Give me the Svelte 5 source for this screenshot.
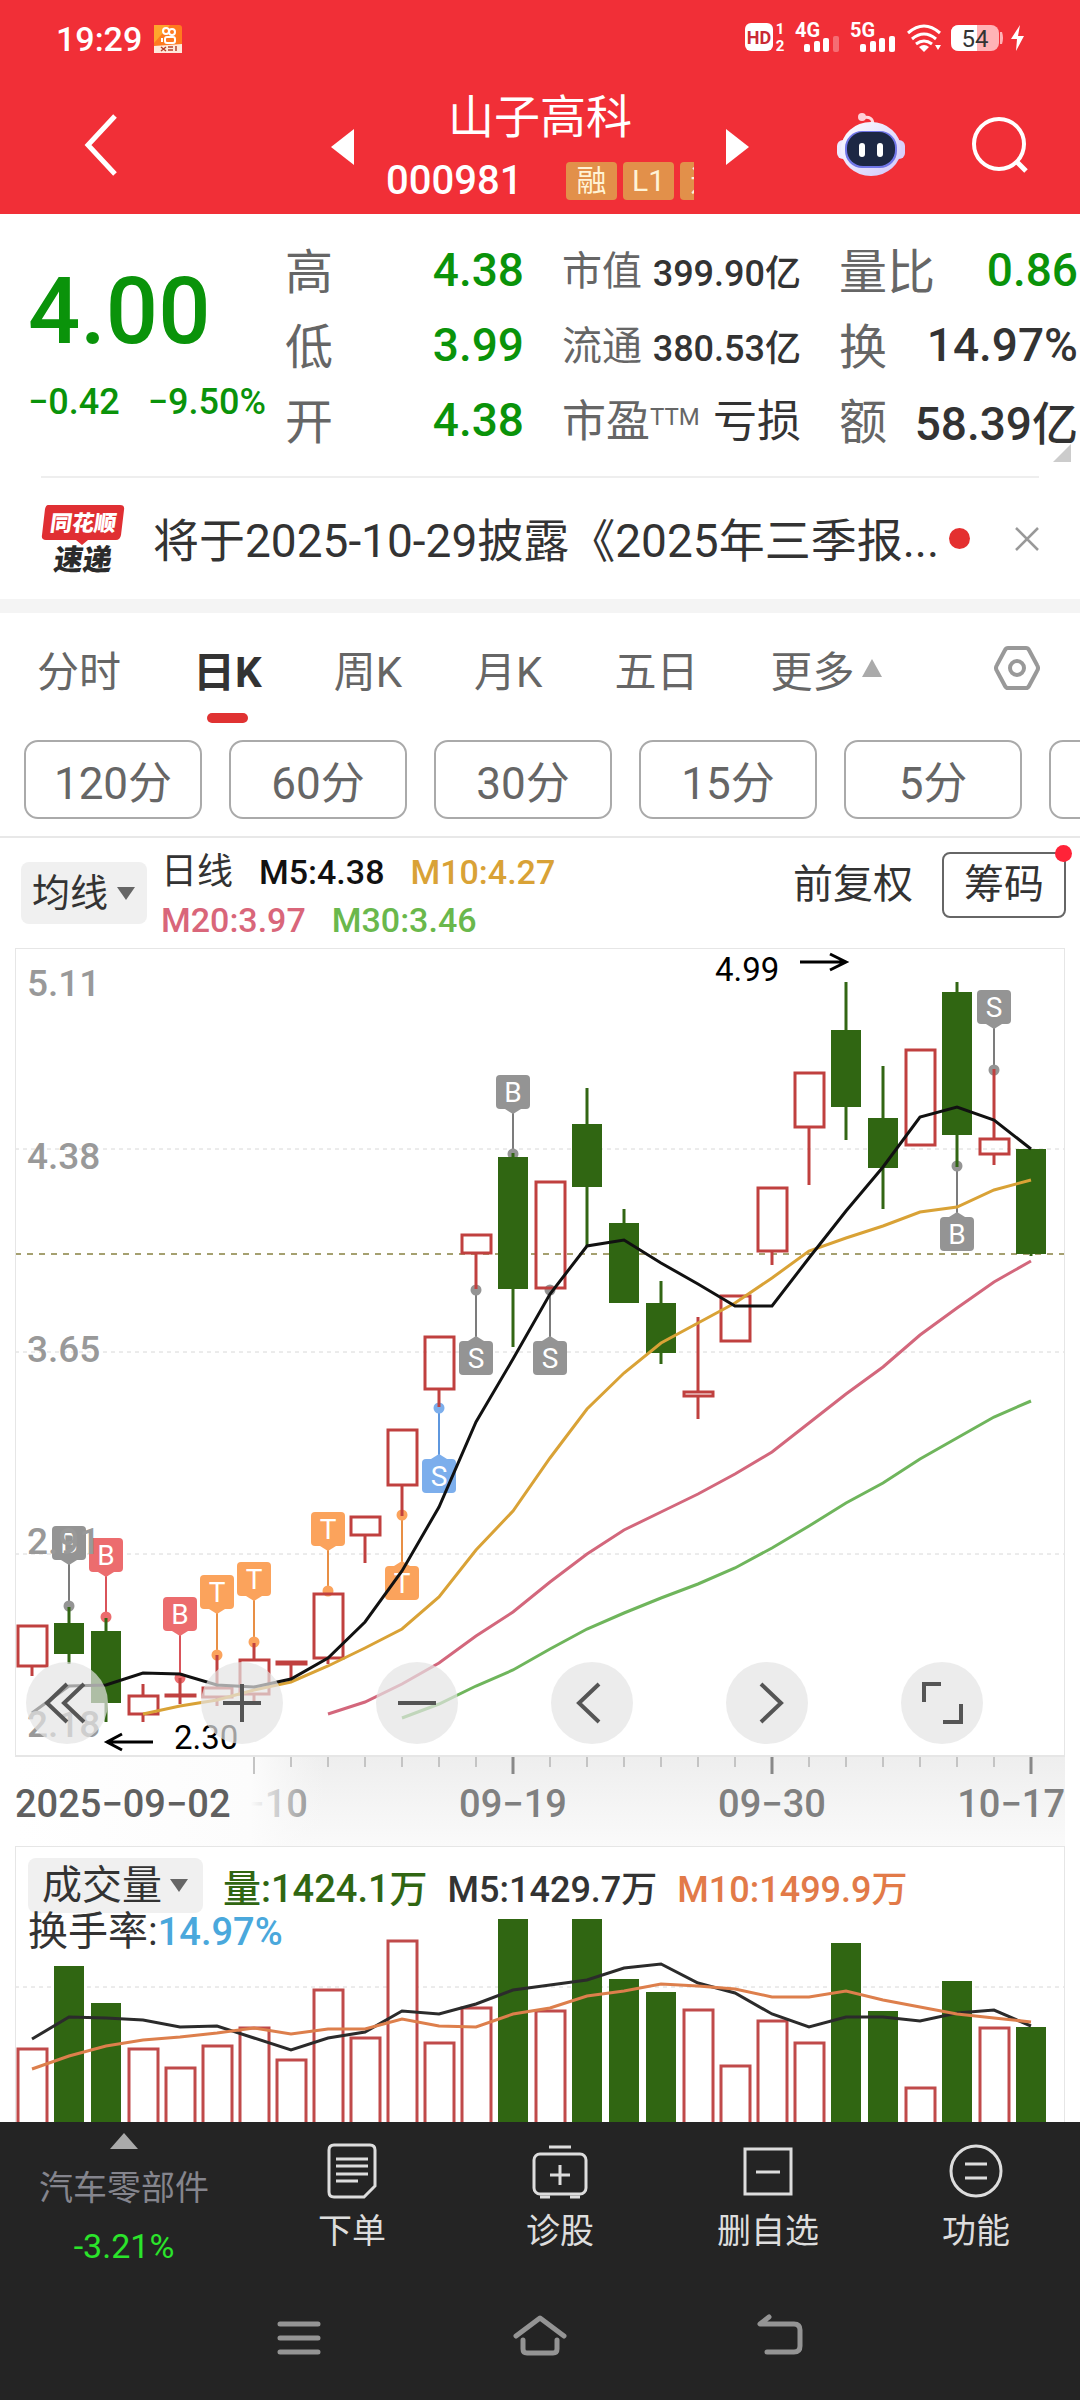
<script lang="ts">
  type Candle = { top: number; bottom: number; high?: number; low?: number; up: boolean };
  type Marker = { i: number; text: string; tone: string; box: number; dot: number };

  const x = (i: number) => 17 + i * 37;

  const c = (up: boolean, top: number, bottom: number, high = top, low = bottom): Candle =>
    ({ up, top, bottom, high, low });

  const candles: Candle[] = [
    c(true, 678, 718, 678, 728),
    c(false, 675, 706, 659, 716),
    c(false, 683, 755, 670, 774),
    c(true, 748, 766, 736, 774),
    c(true, 747, 747, 730, 756),
    c(true, 740, 749, 707, 758),
    c(true, 712, 746, 695, 755),
    c(true, 714, 716, 714, 730),
    c(true, 646, 710, 646, 716),
    c(true, 569, 587, 569, 615),
    c(true, 482, 537, 482, 568),
    c(true, 389, 441, 389, 459),
    c(true, 287, 305, 287, 341),
    c(false, 209, 341, 205, 399),
    c(true, 234, 340),
    c(false, 176, 239, 140, 299),
    c(false, 275, 355, 261, 355),
    c(false, 355, 405, 333, 416),
    c(true, 444, 448, 369, 471),
    c(true, 348, 393),
    c(true, 240, 303, 240, 317),
    c(true, 125, 179, 125, 237),
    c(false, 82, 159, 34, 192),
    c(false, 170, 220, 118, 261),
    c(true, 102, 197),
    c(false, 44, 187, 34, 219),
    c(true, 191, 206, 121, 217),
    c(false, 201, 306, 201, 308)
  ];

  const markers: Marker[] = [
    { i: 1, text: 'B', tone: 'gray', box: 578, dot: 658 },
    { i: 2, text: 'B', tone: 'red', box: 590, dot: 669 },
    { i: 4, text: 'B', tone: 'red', box: 649, dot: 730 },
    { i: 5, text: 'T', tone: 'orange', box: 627, dot: 707 },
    { i: 6, text: 'T', tone: 'orange', box: 614, dot: 694 },
    { i: 8, text: 'T', tone: 'orange', box: 564, dot: 643 },
    { i: 10, text: 'T', tone: 'orange', box: 618, dot: 567 },
    { i: 11, text: 'S', tone: 'blue', box: 511, dot: 460 },
    { i: 12, text: 'S', tone: 'gray', box: 393, dot: 342 },
    { i: 13, text: 'B', tone: 'gray', box: 127, dot: 206 },
    { i: 14, text: 'S', tone: 'gray', box: 393, dot: 342 },
    { i: 25, text: 'B', tone: 'gray', box: 269, dot: 218 },
    { i: 26, text: 'S', tone: 'gray', box: 42, dot: 122 }
  ];

  const ma5 = [765, 738, 737, 725, 726, 737, 739, 731, 710, 674, 623, 559, 474, 411, 346, 298, 292, 315, 336, 358, 358, 310, 263, 219, 169, 159, 172, 201];
  const ma10 = [766, 758, 752, 742, 734, 718, 700, 681, 649, 602, 563, 510, 461, 425, 395, 375, 355, 330, 303, 290, 278, 264, 259, 242, 232];
  const ma20 = [766, 754, 736, 715, 688, 664, 634, 606, 582, 564, 546, 526, 504, 475, 446, 419, 387, 360, 334, 313];
  const ma30 = [770, 756, 738, 722, 701, 681, 665, 650, 636, 620, 600, 578, 555, 535, 511, 490, 469, 453];

  const volumes = [202, 120, 157, 202, 221, 199, 181, 213, 143, 191, 94, 196, 161, 73, 164, 73, 133, 146, 163, 219, 174, 196, 97, 165, 241, 135, 181, 181];
  const vol5 = [193, 171, 172, 174, 181, 180, 192, 204, 192, 186, 165, 168, 158, 144, 139, 134, 122, 118, 137, 147, 168, 181, 171, 171, 175, 167, 164, 180];
  const vol10 = [223, 210, 200, 194, 191, 187, 182, 188, 183, 183, 173, 180, 181, 168, 162, 150, 145, 138, 140, 143, 151, 151, 145, 154, 161, 168, 172, 176];

  // series shorter than the window are aligned to its right edge
  const line = (values: number[]) =>
    values.map((y, k) => `${x(k + candles.length - values.length)},${y}`).join(' ');

  const priceLabels = [
    { text: '5.11', y: 48 },
    { text: '4.38', y: 221 },
    { text: '3.65', y: 414 },
    { text: '2.91', y: 606 },
    { text: '2.18', y: 789 }
  ];

  const ticks = Array.from({ length: 22 }, (_, k) => k + 6);

  const stats = [
    [
      { name: '高', value: '4.38', down: true },
      { name: '低', value: '3.99', down: true },
      { name: '开', value: '4.38', down: true }
    ],
    [
      { name: '市值', value: '399.90亿', small: true },
      { name: '流通', value: '380.53亿', small: true },
      { name: '市盈', sup: 'TTM', value: '亏损', medium: true }
    ],
    [
      { name: '量比', value: '0.86', down: true },
      { name: '换', value: '14.97%' },
      { name: '额', value: '58.39亿' }
    ]
  ];

  const periods = ['分时', '日K', '周K', '月K', '五日'];
  const minutes = ['120分', '60分', '30分', '15分', '5分', '1分'];
  let period = $state('日K');
</script>

<div class="app">
  <header>
    <div class="status">
      <span class="clock">19:29</span>
      <svg class="kuai" viewBox="0 0 28 28" aria-hidden="true">
        <rect width="28" height="28" rx="3" fill="#ff7a1f" />
        <path d="M0 0h16L0 18z" fill="#ffa52c" />
        <g fill="none" stroke="#fff" stroke-width="2">
          <circle cx="12" cy="6" r="3" />
          <circle cx="18" cy="7" r="3" />
          <rect x="11" y="12" width="10" height="6" rx="2" />
          <path d="M8 13v4" />
        </g>
        <path d="M0 21l28-2v9H0z" fill="#ffe9dc" />
        <path d="M7 22l5 4M12 22l-5 4M14 22h5M14 25h5M22 21v5" stroke="#b4442c" stroke-width="1.5" />
      </svg>
      <svg class="signals" viewBox="0 0 290 40" role="img" aria-label="电量 54">
        <rect x="5" y="4" width="28" height="28" rx="6" fill="#fff" />
        <text class="hd" x="19" y="25">HD</text>
        <text class="sim" x="40" y="15">1</text>
        <text class="sim" x="40" y="32">2</text>
        <text class="net" x="55" y="18">4G</text>
        <text class="net" x="110" y="18">5G</text>
        <g fill="#fff">
          <rect x="64" y="25" width="6" height="8" rx="2" />
          <rect x="74" y="22" width="6" height="11" rx="2" />
          <rect x="83" y="19" width="6" height="14" rx="2" />
          <rect x="93" y="17" width="6" height="16" rx="2" opacity="0.3" />
          <rect x="120" y="25" width="6" height="8" rx="2" />
          <rect x="130" y="22" width="6" height="11" rx="2" />
          <rect x="139" y="19" width="6" height="14" rx="2" />
          <rect x="149" y="17" width="6" height="16" rx="2" />
          <path d="M179 28q5-4 10 0l-5 5z" />
          <path d="M195 26h6l-3 5z" />
          <path d="M271 20l9-14-2 11h6l-8 15 1-12z" />
        </g>
        <g fill="none" stroke="#fff" stroke-width="3">
          <path d="M168 14q16-14 32 0" />
          <path d="M172 20q12-10 24 0" />
          <path d="M176 25q8-6 16 0" />
        </g>
        <rect x="211" y="6" width="48" height="26" rx="8" fill="#ffb3b6" />
        <path d="M260 13h2q2 6 0 12h-2z" fill="#ffb3b6" />
        <path d="M219 6h18v26h-18q-8 0-8-8V14q0-8 8-8z" fill="#fff" />
        <text class="charge" x="235" y="28">54</text>
      </svg>
    </div>

    <div class="titlebar">
      <button class="back" aria-label="返回">
        <svg viewBox="0 0 34 62"><path d="M31 2L4 31l27 29" fill="none" stroke="#fff" stroke-width="5" /></svg>
      </button>
      <div class="switcher">
        <button aria-label="上一只">
          <svg class="arrow" viewBox="0 0 23 36"><path d="M23 0v36L0 18z" fill="#fff" /></svg>
        </button>
        <div class="stock">
          <h1>山子高科</h1>
          <div class="code">
            <span>000981</span>
            <span class="tags"><i>融</i><i>L1</i><i>通</i></span>
          </div>
        </div>
        <button aria-label="下一只">
          <svg class="arrow" viewBox="0 0 23 36"><path d="M0 0v36l23-18z" fill="#fff" /></svg>
        </button>
      </div>
      <button class="robot" aria-label="智能助手">
        <svg viewBox="0 0 68 64">
          <defs>
            <linearGradient id="head" x1="0" y1="0" x2="1" y2="1">
              <stop offset="0" stop-color="#fff" />
              <stop offset="1" stop-color="#cfc6fb" />
            </linearGradient>
          </defs>
          <path d="M25 5q11-3 11 7" fill="none" stroke="#ffd9de" stroke-width="3" />
          <circle cx="25" cy="4" r="4" fill="#ffd0d6" />
          <rect x="0" y="27" width="14" height="19" rx="6" fill="#efe9ff" />
          <rect x="54" y="27" width="14" height="19" rx="6" fill="#d9d0fb" />
          <ellipse cx="34" cy="36" rx="30" ry="27" fill="url(#head)" />
          <rect x="8" y="18" width="52" height="37" rx="17" fill="#7076e8" />
          <rect x="10" y="19" width="48" height="34" rx="16" fill="#1c2744" />
          <rect x="22" y="30" width="6" height="14" rx="3" fill="#fff" />
          <rect x="40" y="30" width="6" height="14" rx="3" fill="#fff" />
        </svg>
      </button>
      <button class="search" aria-label="搜索">
        <svg viewBox="0 0 58 58" fill="none" stroke="#fff" stroke-width="4">
          <circle cx="28" cy="28" r="25" />
          <path d="M46 46l9 9" stroke-width="5" />
        </svg>
      </button>
    </div>
  </header>

  <section class="quote">
    <div class="price">
      <strong>4.00</strong>
      <p><span>−0.42</span><span>−9.50%</span></p>
    </div>
    <div class="stats">
      {#each stats as column}
        <dl>
          {#each column as item}
            <div class:small={item.small} class:medium={item.medium}>
              <dt>{item.name}{#if item.sup}<sup>{item.sup}</sup>{/if}</dt>
              <dd class:down={item.down}>{item.value}</dd>
            </div>
          {/each}
        </dl>
      {/each}
    </div>
    <span class="corner"></span>
  </section>

  <section class="news">
    <svg class="logo" viewBox="0 0 84 70" role="img" aria-label="同花顺速递">
      <path d="M7 1h72q5 0 4 5l-3 25q-1 5-5 5H47l-6 5-6-5H5q-5 0-4-5L4 5q1-4 3-4z" fill="#e02f33" />
      <g transform="skewX(-8)">
        <text x="45" y="27" fill="#fff">同花顺</text>
        <text class="su" x="50" y="66" fill="#2b2b2b">速递</text>
      </g>
    </svg>
    <a href="#news">将于2025-10-29披露《2025年三季报...</a>
    <span class="dot"></span>
    <button aria-label="关闭">
      <svg viewBox="0 0 24 24"><path d="M1 1l22 22M23 1L1 23" stroke="#999" stroke-width="2.5" /></svg>
    </button>
  </section>

  <nav class="tabs">
    {#each periods as name}
      <button class:active={name === period} onclick={() => (period = name)}>{name}</button>
    {/each}
    <button class="more">
      更多<svg viewBox="0 0 20 18"><path d="M10 0l10 18H0z" fill="#aaa" /></svg>
    </button>
    <button class="gear" aria-label="设置">
      <svg viewBox="0 0 46 44" fill="none" stroke="#999" stroke-width="4">
        <path d="M14 2h18q2 0 3 2l8 15q2 3 0 6l-8 15q-1 2-3 2H14q-2 0-3-2L3 25q-2-3 0-6l8-15q1-2 3-2z" />
        <circle cx="23" cy="22" r="7" />
      </svg>
    </button>
  </nav>

  <div class="chips">
    {#each minutes as name}
      <button>{name}</button>
    {/each}
  </div>

  <section class="legend">
    <label class="picker">
      <select aria-label="主图指标"><option>均线</option></select>
      <svg viewBox="0 0 18 13"><path d="M0 0h18L9 13z" fill="#666" /></svg>
    </label>
    <div class="averages">
      <p><span class="cycle">日线</span><span class="m5">M5:4.38</span><span class="m10">M10:4.27</span></p>
      <p><span class="m20">M20:3.97</span><span class="m30">M30:3.46</span></p>
    </div>
    <div class="tools">
      <button>前复权</button>
      <button class="chipset">筹码<span class="badge"></span></button>
    </div>
  </section>

  <section class="kline">
    <svg class="chart" viewBox="0 0 1050 898">
      <defs>
        <linearGradient id="axis" x1="0" y1="0" x2="0" y2="1">
          <stop offset="0" stop-color="#eee" />
          <stop offset="1" stop-color="#fafafa" />
        </linearGradient>
        <linearGradient id="fade" x1="0" y1="0" x2="1" y2="0">
          <stop offset="0" stop-color="#fff" />
          <stop offset="0.76" stop-color="#fcfcfc" />
          <stop offset="1" stop-color="#f8f8f8" stop-opacity="0" />
        </linearGradient>
      </defs>

      <path class="grid" d="M0 201H1050M0 404H1050M0 606H1050" />
      <path class="current" d="M0 306H1050" />

      {#each markers as m}
        {@const above = m.box < m.dot}
        <g class="marker {m.tone}">
          <path class="stem" d="M{x(m.i)} {above ? m.box + 38 : m.box - 4}V{m.dot}" />
          <circle cx={x(m.i)} cy={m.dot} r="5.5" />
          <rect x={x(m.i) - 17} y={m.box} width="34" height="34" rx="4" />
          {#if above}
            <path d="M{x(m.i) - 8} {m.box + 34}h16l-8 5z" />
          {:else}
            <path d="M{x(m.i) - 8} {m.box}h16l-8-5z" />
          {/if}
          <text x={x(m.i)} y={m.box + 27}>{m.text}</text>
        </g>
      {/each}

      {#each candles as k, i}
        <g class={k.up ? 'up' : 'fall'}>
          <path d="M{x(i)} {k.high}V{k.top}M{x(i)} {k.bottom}V{k.low}" />
          <rect x={x(i) - (k.up ? 14 : 15)} y={k.top} width={k.up ? 29 : 30} height={k.bottom - k.top || 1} />
        </g>
      {/each}

      <polyline points={line(ma30)} stroke="#6fb55c" />
      <polyline points={line(ma20)} stroke="#d3677c" />
      <polyline points={line(ma10)} stroke="#d9a236" />
      <polyline points={line(ma5)} stroke="#111" />

      {#each priceLabels as label}
        <text class="level" x="12" y={label.y}>{label.text}</text>
      {/each}

      <g class="extreme">
        <text x="700" y="33">4.99</text>
        <path d="M785 14h46M815 6l16 8-16 8" />
        <text x="159" y="801">2.30</text>
        <path d="M138 794H92M107 786l-15 8 15 8" />
      </g>

      <rect x="0" y="809" width="1050" height="89" fill="url(#axis)" />
      <text class="date" x="239" y="869" text-anchor="middle">09−10</text>
      <rect x="0" y="809" width="310" height="89" fill="url(#fade)" />
      {#each ticks as i}
        <path class="tick" class:major={i % 7 === 6 && i > 6} d="M{x(i)} 809v{i % 7 === 6 ? 17 : 10}" />
      {/each}
      <text class="date first" x="0" y="869">2025−09−02</text>
      <text class="date" x="498" y="869" text-anchor="middle">09−19</text>
      <text class="date" x="757" y="869" text-anchor="middle">09−30</text>
      <text class="date" x="1050" y="869" text-anchor="end">10−17</text>
      <rect class="frame" x="0" y="0" width="1050" height="808" />
    </svg>

    <div class="controls">
      <button aria-label="最早"><svg viewBox="0 0 82 82"><path d="M41 22L21 41l20 19M58 22L38 41l20 19" /></svg></button>
      <button aria-label="放大"><svg viewBox="0 0 82 82"><path d="M22 41h38M41 22v38" /></svg></button>
      <button aria-label="缩小"><svg viewBox="0 0 82 82"><path d="M22 41h38" /></svg></button>
      <button aria-label="左移"><svg viewBox="0 0 82 82"><path d="M48 22L28 41l20 19" /></svg></button>
      <button aria-label="右移"><svg viewBox="0 0 82 82"><path d="M35 22l20 19-20 19" /></svg></button>
      <button aria-label="全屏"><svg viewBox="0 0 82 82"><path d="M40 22H23v18M42 60h18V42" /></svg></button>
    </div>
  </section>

  <section class="volume">
    <svg class="chart" viewBox="0 0 1050 276">
      <path class="grid" d="M0 141H1050" />
      {#each volumes as top, i}
        {#if candles[i].up}
          <rect class="bar-up" x={x(i) - 14} y={top + 1} width="29" height={290 - top} />
        {:else}
          <rect class="bar-fall" x={x(i) - 15} y={top} width="30" height={290 - top} />
        {/if}
      {/each}
      <polyline points={line(vol5)} stroke="#2b2b2b" />
      <polyline points={line(vol10)} stroke="#dd7f4c" />
      <rect class="frame" x="0" y="0" width="1050" height="290" />
    </svg>
    <div class="volume-head">
      <div class="row">
        <label class="picker">
          <select aria-label="副图指标"><option>成交量</option></select>
          <svg viewBox="0 0 18 13"><path d="M0 0h18L9 13z" fill="#666" /></svg>
        </label>
        <span class="vol">量:1424.1万</span>
        <span>M5:1429.7万</span>
        <span class="v10">M10:1499.9万</span>
      </div>
      <p>换手率:<span>14.97%</span></p>
    </div>
  </section>

  <footer>
    <nav class="actions">
      <button class="sector">
        <svg viewBox="0 0 28 16"><path d="M14 0l14 16H0z" fill="#aaa" /></svg>
        <span>汽车零部件</span>
        <em>-3.21%</em>
      </button>
      <button>
        <svg viewBox="0 0 56 56">
          <path d="M10 2h36q5 0 5 5v36L40 54H10q-5 0-5-5V7q0-5 5-5z" />
          <path d="M12 16h32M12 23h32M12 31h32M12 38h22" />
        </svg>
        下单
      </button>
      <button>
        <svg viewBox="0 0 56 56">
          <rect x="2" y="11" width="52" height="40" rx="6" />
          <path d="M17 4h22M28 22v20M18 32h20M8 54h10M38 54h10" />
        </svg>
        诊股
      </button>
      <button>
        <svg viewBox="0 0 56 56">
          <rect x="5" y="6" width="46" height="45" />
          <path d="M16 29h24" />
        </svg>
        删自选
      </button>
      <button>
        <svg viewBox="0 0 56 56">
          <circle cx="28" cy="28" r="25" />
          <path d="M17 21h22M17 35h22" />
        </svg>
        功能
      </button>
    </nav>
    <nav class="system">
      <button aria-label="菜单"><svg viewBox="0 0 56 48"><path d="M8 10h38M8 24h38M8 38h38" /></svg></button>
      <button aria-label="主页"><svg viewBox="0 0 56 48"><path d="M4 22L28 4l24 18M11 26v9q0 4 4 4h26q4 0 4-4v-9" /></svg></button>
      <button aria-label="后退"><svg viewBox="0 0 56 48"><path d="M17 3L8 10h34q6 0 6 6v16q0 6-6 6H15" /></svg></button>
    </nav>
  </footer>
</div>

<style>
  :global(body) {
    background: #fff;
  }

  .app {
    display: flex;
    flex-direction: column;
    font-family: Roboto, 'Noto Sans CJK SC', sans-serif;
    color: #333;
    overflow: hidden;
  }

  button {
    border: 0;
    padding: 0;
    background: none;
    font: inherit;
    color: inherit;
    white-space: nowrap;
  }

  svg {
    display: block;
  }

  p,
  h1,
  dl,
  dd {
    margin: 0;
  }

  header {
    background: #f12f37;
    color: #fff;
  }

  .status {
    display: flex;
    align-items: center;
    height: 64px;
    padding: 14px 50px 0 56px;
    box-sizing: border-box;
  }

  .clock {
    font-size: 34px;
    font-weight: 500;
  }

  .kuai {
    width: 28px;
    margin-left: 12px;
  }

  .signals {
    width: 290px;
    margin-left: auto;
  }

  .signals text {
    fill: #fff;
    font-weight: 700;
  }

  .signals .hd {
    fill: #c92a35;
    font-size: 18px;
    text-anchor: middle;
  }

  .signals .sim {
    font-size: 15px;
    text-anchor: middle;
  }

  .signals .net {
    font-size: 20px;
  }

  .signals .charge {
    fill: #333;
    font-size: 24px;
    font-weight: 400;
    text-anchor: middle;
  }

  .titlebar {
    display: flex;
    align-items: center;
    height: 150px;
    padding: 12px 51px 0 84px;
    box-sizing: border-box;
  }

  .back svg {
    width: 34px;
  }

  .switcher {
    flex: 1;
    display: flex;
    align-items: center;
    justify-content: space-between;
    margin: 0 88px 0 213px;
  }

  .arrow {
    width: 23px;
    margin-top: 4px;
  }

  .stock {
    width: 308px;
    padding-top: 8px;
  }

  h1 {
    font-size: 46px;
    font-weight: 400;
    line-height: 64px;
    text-align: center;
  }

  .code {
    display: flex;
    align-items: center;
    justify-content: space-between;
    font-size: 40px;
    font-weight: 500;
    line-height: 64px;
  }

  .tags {
    display: flex;
    gap: 6px;
    width: 128px;
    overflow: hidden;
  }

  .tags i {
    flex: none;
    width: 51px;
    border-radius: 4px;
    background: #e2904a;
    color: #fff3d6;
    font-size: 30px;
    font-style: normal;
    font-weight: 400;
    line-height: 38px;
    text-align: center;
  }

  .robot svg {
    width: 68px;
  }

  .search {
    margin-left: 66px;
  }

  .search svg {
    width: 58px;
  }

  .quote {
    position: relative;
    display: flex;
    padding: 18px 2px 19px 28px;
  }

  .price {
    width: 257px;
    flex: none;
    padding-top: 34px;
    color: #0a930a;
  }

  .price strong {
    display: block;
    font-size: 92px;
    font-weight: 500;
    line-height: 92px;
  }

  .price p {
    display: flex;
    justify-content: space-between;
    margin: 22px 19px 0 0;
    font-size: 36px;
    font-weight: 500;
    line-height: 44px;
  }

  .stats {
    flex: 1;
    display: grid;
    grid-template-columns: repeat(3, 1fr);
    gap: 38px;
  }

  dl div {
    display: flex;
    align-items: center;
    justify-content: space-between;
    height: 75px;
    font-size: 46px;
    white-space: nowrap;
  }

  dl .small {
    font-size: 36px;
  }

  dl .medium {
    font-size: 44px;
  }

  dt {
    padding-bottom: 4px;
    color: #666;
    font-size: 48px;
  }

  .small dt {
    font-size: 40px;
  }

  .medium dt {
    font-size: 44px;
  }

  dt sup {
    font-size: 24px;
    line-height: 24px;
    vertical-align: 12px;
  }

  dd {
    font-weight: 500;
  }

  .medium dd {
    padding-bottom: 4px;
    font-weight: 400;
  }

  .down {
    color: #0a930a;
  }

  .corner {
    position: absolute;
    right: 9px;
    bottom: 14px;
    border-left: 18px solid transparent;
    border-bottom: 18px solid #ccc;
  }

  .news {
    display: flex;
    align-items: center;
    height: 121px;
    margin: 0 41px;
    border-top: 2px solid #eee;
  }

  .logo {
    width: 84px;
    flex: none;
  }

  .logo text {
    font-size: 22px;
    font-weight: 900;
    text-anchor: middle;
  }

  .logo .su {
    font-size: 29px;
  }

  .news a {
    margin-left: 28px;
    padding-bottom: 4px;
    color: #333;
    font-size: 46px;
    text-decoration: none;
    white-space: nowrap;
  }

  .dot {
    width: 21px;
    height: 21px;
    flex: none;
    margin-left: 10px;
    border-radius: 50%;
    background: #e43030;
  }

  .news button {
    margin-left: auto;
  }

  .news button svg {
    width: 24px;
  }

  .tabs {
    display: flex;
    align-items: center;
    gap: 72px;
    height: 128px;
    padding: 0 40px 4px 37px;
    border-top: 14px solid #f4f4f4;
    box-sizing: border-box;
    color: #666;
    font-size: 42px;
  }

  .tabs button {
    position: relative;
  }

  .tabs .active {
    color: #333;
    font-weight: 700;
  }

  .tabs .active::after {
    content: '';
    position: absolute;
    left: calc(50% - 20px);
    bottom: -24px;
    width: 41px;
    height: 10px;
    border-radius: 5px;
    background: #e03232;
  }

  .more {
    display: flex;
    align-items: center;
    gap: 8px;
  }

  .more svg {
    width: 20px;
  }

  .tabs .gear {
    margin-left: auto;
  }

  .gear svg {
    width: 46px;
  }

  .chips {
    display: flex;
    gap: 27px;
    padding: 13px 0 17px 24px;
    border-bottom: 2px solid #e8e8e8;
    overflow: hidden;
  }

  .chips button {
    width: 178px;
    height: 79px;
    flex: none;
    border: 2px solid #aaa;
    border-radius: 14px;
    color: #666;
    font-size: 44px;
    box-sizing: border-box;
  }

  .legend {
    display: flex;
    align-items: center;
    height: 110px;
    padding: 0 14px 0 21px;
  }

  .picker {
    display: flex;
    align-items: center;
    gap: 8px;
    padding: 0 12px 0 11px;
    border-radius: 8px;
    background: #f0f0f0;
  }

  .picker svg {
    width: 18px;
  }

  select {
    appearance: none;
    height: 62px;
    padding: 0;
    border: 0;
    background: none;
    color: #333;
    font: inherit;
    font-size: 38px;
  }

  .averages {
    margin: 0 auto 0 14px;
    padding-top: 6px;
    font-size: 34px;
    font-weight: 500;
    line-height: 48px;
    white-space: nowrap;
  }

  .averages p {
    display: flex;
    gap: 26px;
  }

  .cycle {
    font-size: 36px;
    font-weight: 400;
  }

  .m5 {
    color: #111;
  }

  .m10 {
    color: #d9a236;
  }

  .m20 {
    color: #d9667a;
  }

  .m30 {
    color: #6ab84c;
  }

  .tools {
    display: flex;
    align-items: center;
    gap: 29px;
    padding-bottom: 16px;
    font-size: 40px;
    line-height: 60px;
  }

  .chipset {
    position: relative;
    width: 124px;
    height: 66px;
    border: 2px solid #666;
    border-radius: 8px;
  }

  .badge {
    position: absolute;
    top: -9px;
    right: -8px;
    width: 17px;
    height: 17px;
    border-radius: 50%;
    background: #ff2338;
  }

  .kline,
  .volume {
    position: relative;
    margin: 0 15px;
  }

  .chart {
    width: 100%;
  }

  .frame {
    fill: none;
    stroke: #e6e6e6;
    stroke-width: 2;
  }

  .grid {
    stroke: #d8d8d8;
    stroke-width: 1;
    stroke-dasharray: 4 4;
  }

  .current {
    stroke: #a5a070;
    stroke-width: 2;
    stroke-dasharray: 6 6;
  }

  .up path {
    stroke: #c0403f;
    stroke-width: 3;
  }

  .up rect {
    fill: none;
    stroke: #c0403f;
    stroke-width: 3;
  }

  .fall path {
    stroke: #326614;
    stroke-width: 3;
  }

  .fall rect,
  .bar-fall {
    fill: #306612;
  }

  .bar-up {
    fill: #fff;
    stroke: #c04a4a;
    stroke-width: 3;
  }

  polyline {
    fill: none;
    stroke-width: 3;
  }

  .gray {
    fill: #949494;
    stroke: #7c7c7c;
  }

  .red {
    fill: #ec6c6e;
    stroke: #d9535a;
  }

  .orange {
    fill: #fba35c;
    stroke: #e88f45;
  }

  .blue {
    fill: #7caeec;
    stroke: #5e97de;
  }

  .marker {
    stroke-width: 0;
  }

  .marker .stem {
    stroke-width: 2;
  }

  .marker text {
    fill: #fff;
    font-size: 28px;
    text-anchor: middle;
  }

  .level {
    fill: #999;
    font-size: 37px;
    font-weight: 500;
  }

  .extreme text {
    fill: #000;
    font-size: 33px;
  }

  .extreme path {
    fill: none;
    stroke: #000;
    stroke-width: 3;
  }

  .tick {
    stroke: #c4c4c4;
    stroke-width: 2;
  }

  .tick.major {
    stroke: #888;
    stroke-width: 3;
  }

  .date {
    fill: #808080;
    font-size: 38px;
    font-weight: 500;
  }

  .date.first {
    fill: #606060;
  }

  .controls {
    position: absolute;
    left: 11px;
    right: 82px;
    bottom: 102px;
    display: flex;
    justify-content: space-between;
  }

  .controls button {
    width: 82px;
    height: 82px;
    border-radius: 50%;
    background: rgba(228, 228, 228, 0.7);
  }

  .controls path {
    fill: none;
    stroke: #555;
    stroke-width: 4;
  }

  .volume-head {
    position: absolute;
    top: 12px;
    left: 13px;
    font-size: 36px;
    white-space: nowrap;
  }

  .row {
    display: flex;
    align-items: center;
    gap: 20px;
  }

  .row span {
    font-weight: 500;
  }

  .row select {
    height: 55px;
    font-size: 40px;
  }

  .row .picker {
    padding: 0 15px 0 14px;
  }

  .row .vol {
    color: #306612;
    font-size: 38px;
  }

  .row .v10 {
    color: #e27a48;
  }

  .volume-head p {
    font-size: 40px;
    line-height: 38px;
  }

  .volume-head p span {
    color: #4aa8dc;
    font-size: 38px;
    font-weight: 500;
  }

  footer {
    position: relative;
    height: 278px;
    background: #242424;
    color: #ddd;
  }

  .actions {
    display: grid;
    grid-template-columns: 248fr repeat(4, 208fr);
    height: 152px;
  }

  .actions button {
    display: flex;
    flex-direction: column;
    align-items: center;
    padding-top: 21px;
    font-size: 34px;
    line-height: 64px;
  }

  .actions button svg {
    width: 56px;
    fill: none;
    stroke: #ddd;
    stroke-width: 3;
  }

  .actions .sector {
    padding-top: 11px;
    color: #85858d;
  }

  .actions .sector svg {
    width: 28px;
    margin-bottom: 7px;
    stroke: none;
  }

  .sector em {
    color: #2be42b;
    font-style: normal;
    line-height: 52px;
  }

  .system {
    display: flex;
    justify-content: center;
    gap: 184px;
    padding-top: 40px;
  }

  .system svg {
    width: 56px;
    fill: none;
    stroke: #949494;
    stroke-width: 5;
    stroke-linecap: round;
    stroke-linejoin: round;
  }
</style>
